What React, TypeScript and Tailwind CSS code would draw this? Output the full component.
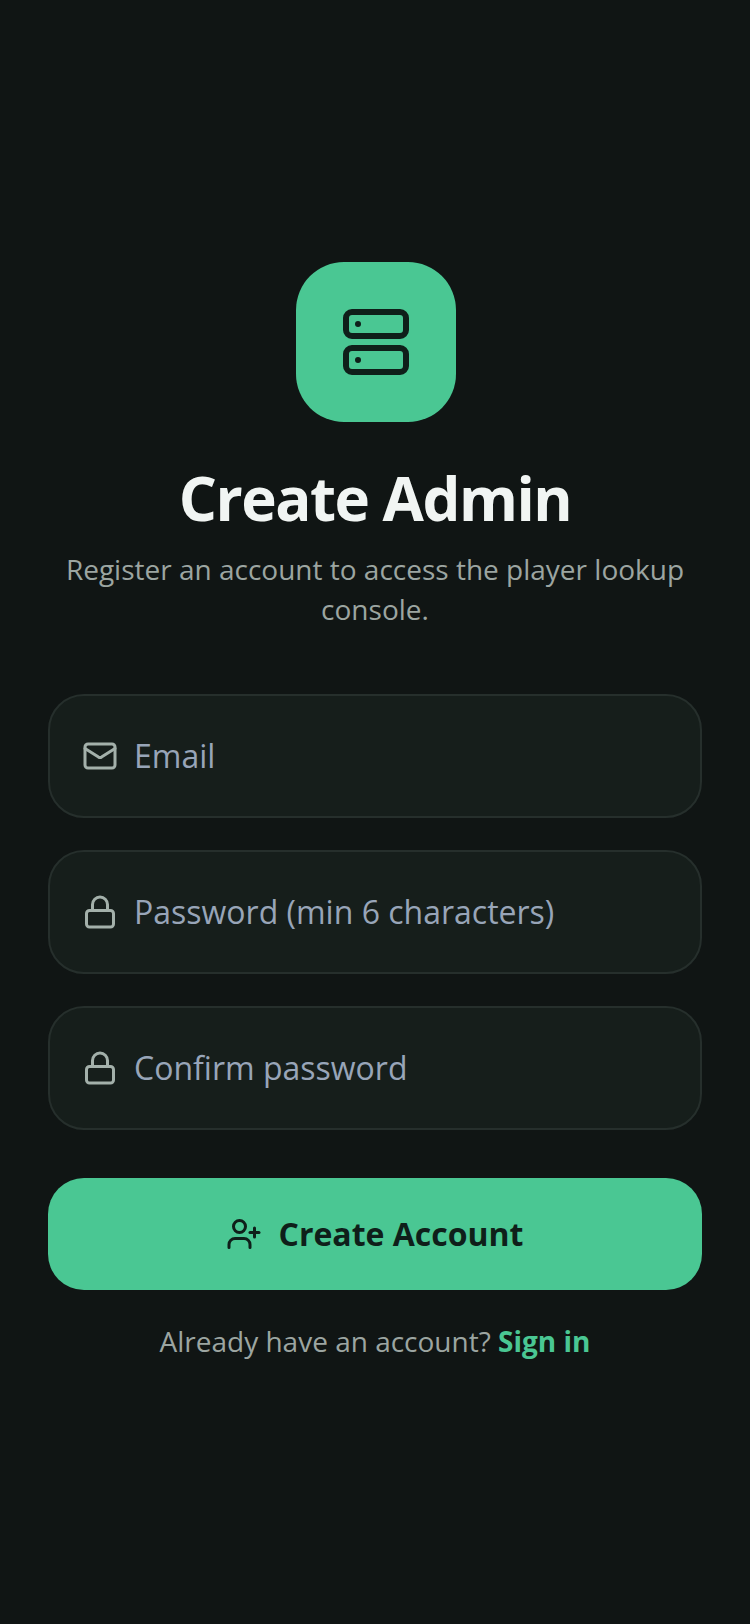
import React, { useState } from 'react';
import { Server, Mail, Lock, UserPlus } from 'lucide-react';

const Field: React.FC<{
  icon: React.ReactNode;
  placeholder: string;
  type: string;
  value: string;
  onChange: (v: string) => void;
}> = ({ icon, placeholder, type, value, onChange }) => (
  <div className="flex h-[124px] items-center gap-4 rounded-[36px] border-2 border-[#262f2c] bg-[#161e1b] px-8">
    {icon}
    <input
      type={type}
      value={value}
      onChange={(e) => onChange(e.target.value)}
      placeholder={placeholder}
      className="min-w-0 flex-1 bg-transparent text-[32px] text-white outline-none placeholder:text-[#98a5b8]"
    />
  </div>
);

const App: React.FC = () => {
  const [email, setEmail] = useState('');
  const [password, setPassword] = useState('');
  const [confirm, setConfirm] = useState('');

  return (
    <div className="flex min-h-screen flex-col justify-center bg-[#101514] px-12 font-['Open_Sans',sans-serif]">
      <div className="flex flex-col items-center">
        <div className="ml-0.5 flex h-40 w-40 items-center justify-center rounded-[48px] bg-[#4ac793]">
          <Server size={72} strokeWidth={2} className="text-[#0f1f1a]" />
        </div>
        <h1 className="mt-10 text-[60px] leading-[72px] font-bold tracking-[-1.5px] text-[#f1f5f3]">Create Admin</h1>
        <p className="mt-[15px] text-center text-[28px] leading-[40px] text-[#9ca5a1]">
          Register an account to access the player lookup console.
        </p>
      </div>

      <form className="mt-[65px] flex flex-col gap-8" onSubmit={(e) => e.preventDefault()}>
        <Field
          icon={<Mail size={36} className="shrink-0 text-[#a3b0aa]" />}
          placeholder="Email"
          type="email"
          value={email}
          onChange={setEmail}
        />
        <Field
          icon={<Lock size={36} className="shrink-0 text-[#a3b0aa]" />}
          placeholder="Password (min 6 characters)"
          type="password"
          value={password}
          onChange={setPassword}
        />
        <Field
          icon={<Lock size={36} className="shrink-0 text-[#a3b0aa]" />}
          placeholder="Confirm password"
          type="password"
          value={confirm}
          onChange={setConfirm}
        />
        <button
          type="submit"
          className="mt-4 flex h-[112px] items-center justify-center gap-4 rounded-[36px] bg-[#4ac793] text-[32px] font-bold text-[#0f1f1a]"
        >
          <UserPlus size={36} />
          Create Account
        </button>
      </form>

      <p className="mt-[31px] mb-px text-center text-[28px] leading-[40px] text-[#9ca5a1]">
        Already have an account? <span className="font-bold text-[#4ac793]">Sign in</span>
      </p>
    </div>
  );
};

export default App;
